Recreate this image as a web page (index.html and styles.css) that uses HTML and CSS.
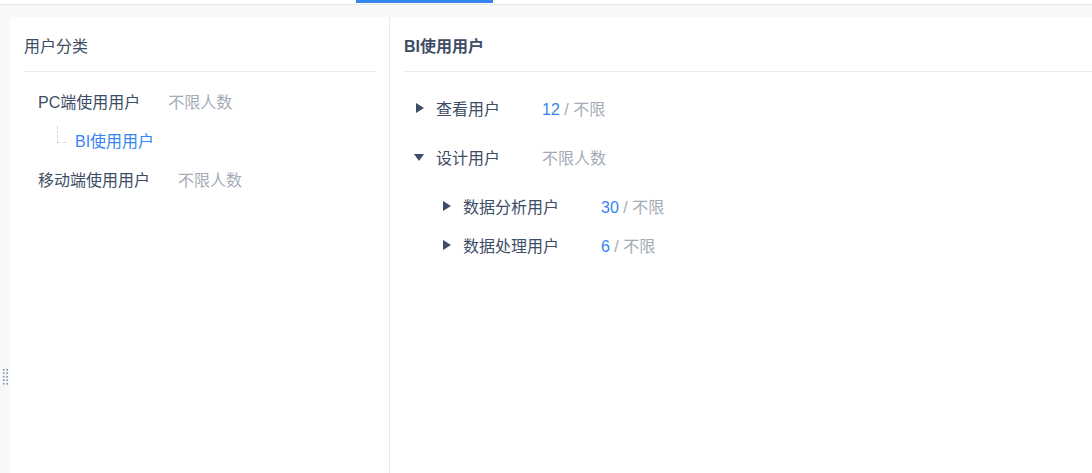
FILE: index.html
```html
<!DOCTYPE html>
<html lang="zh-CN">
<head>
    <meta charset="UTF-8">
    <title>用户管理</title>
    <link rel="stylesheet" href="styles.css">
</head>
<body>
    <div class="top-bar">
        <div class="tab-indicator"></div>
    </div>
    <div class="main">
        <div class="resize-handle"></div>
        <div class="panel side-panel">
            <div class="panel-header">用户分类</div>
            <div class="category-list">
                <div class="category-row">
                    <span class="category-name">PC端使用用户</span>
                    <span class="category-limit">不限人数</span>
                </div>
                <div class="category-row child">
                    <span class="tree-line"></span>
                    <span class="category-name active">BI使用用户</span>
                </div>
                <div class="category-row">
                    <span class="category-name">移动端使用用户</span>
                    <span class="category-limit">不限人数</span>
                </div>
            </div>
        </div>
        <div class="panel detail-panel">
            <div class="panel-header bold">BI使用用户</div>
            <div class="user-tree">
                <div class="node">
                    <div class="node-row">
                        <span class="arrow right"></span>
                        <span class="node-name">查看用户</span>
                        <span class="node-count"><em>12</em> / 不限</span>
                    </div>
                </div>
                <div class="node">
                    <div class="node-row">
                        <span class="arrow down"></span>
                        <span class="node-name">设计用户</span>
                        <span class="node-count">不限人数</span>
                    </div>
                    <div class="children">
                        <div class="node-row">
                            <span class="arrow right"></span>
                            <span class="node-name">数据分析用户</span>
                            <span class="node-count"><em>30</em> / 不限</span>
                        </div>
                        <div class="node-row">
                            <span class="arrow right"></span>
                            <span class="node-name">数据处理用户</span>
                            <span class="node-count"><em>6</em> / 不限</span>
                        </div>
                    </div>
                </div>
            </div>
        </div>
    </div>
</body>
</html>
```

FILE: styles.css
```css
html, body {
    height: 100%;
}
body {
    margin: 0;
    font-family: "Liberation Sans", "Noto Sans CJK SC", sans-serif;
    font-size: 16px;
    color: #3d4d66;
    background: #f7f8fa;
    display: flex;
    flex-direction: column;
    overflow: hidden;
}
.top-bar {
    height: 4px;
    background: #fff;
    border-bottom: 1px solid #e4e6ea;
    display: flex;
}
.tab-indicator {
    margin-left: 356px;
    width: 137px;
    height: 3px;
    background: #3685f2;
}
.main {
    flex: 1;
    display: flex;
    padding: 12px 0 0 10px;
    position: relative;
    min-height: 0;
}
.resize-handle {
    position: absolute;
    left: 2px;
    top: 363px;
    width: 6px;
    height: 17px;
    background-image: radial-gradient(circle, #8c97aa 0.9px, transparent 1.1px);
    background-size: 3.5px 3.5px;
}
.panel {
    background: #fff;
}
.side-panel {
    width: 380px;
    border-right: 1px solid #e8eaed;
    box-sizing: border-box;
    padding: 0 14px;
}
.detail-panel {
    flex: 1;
    padding-left: 14px;
}
.panel-header {
    padding: 20px 0 14px;
    line-height: 20px;
    border-bottom: 1px solid #e8eaed;
    font-size: 16px;
}
.panel-header.bold {
    font-weight: bold;
}
.category-list {
    padding: 9px 0 0 14px;
}
.category-row {
    height: 40px;
    display: flex;
    align-items: center;
}
.category-row.child {
    padding-left: 19px;
    height: 38px;
}
.category-limit {
    margin-left: 28px;
    color: #a4abb6;
}
.category-name.active {
    color: #3685f2;
}
.tree-line {
    width: 9px;
    height: 17px;
    margin: -12px 9px 0 0;
    border-left: 1px dashed #d0d4da;
    border-bottom: 1px dashed #d0d4da;
    box-sizing: border-box;
}
.user-tree {
    padding: 16px 0 0 11px;
}
.node {
    margin-bottom: 9px;
}
.node-row {
    height: 40px;
    display: flex;
    align-items: center;
}
.children {
    padding: 9px 0 0 27px;
}
.children .node-row {
    height: 39px;
}
.arrow {
    width: 0;
    height: 0;
    margin-right: 12px;
}
.arrow.right {
    border-top: 5px solid transparent;
    border-bottom: 5px solid transparent;
    border-left: 8px solid #3d4d66;
    margin-left: 1px;
}
.arrow.down {
    border-left: 5px solid transparent;
    border-right: 5px solid transparent;
    border-top: 7px solid #3d4d66;
    margin-left: -1px;
}
.node-count {
    margin-left: 42px;
    color: #a4abb6;
}
.node-count em {
    font-style: normal;
    color: #3685f2;
}
```
